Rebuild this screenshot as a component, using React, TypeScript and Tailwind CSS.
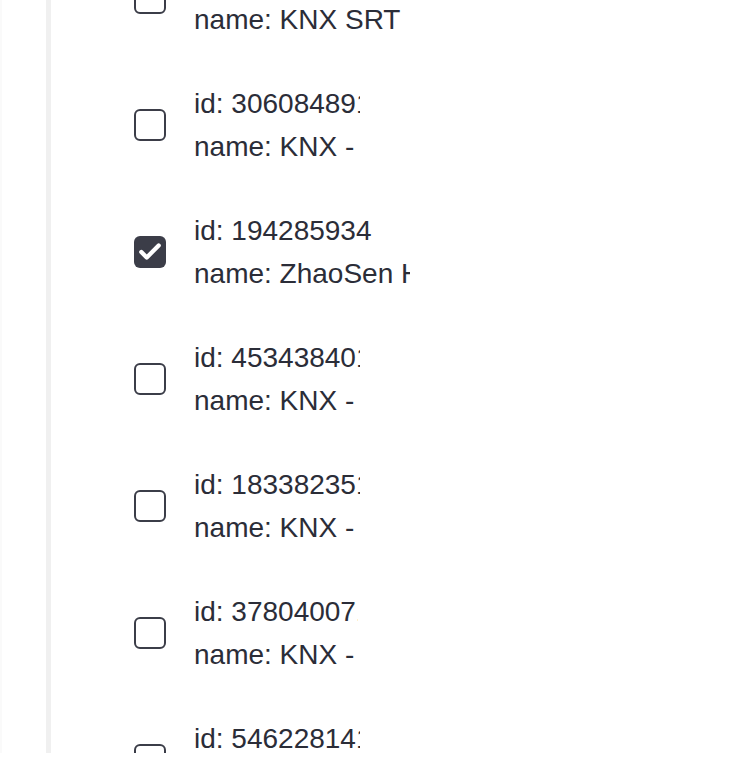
import { Check } from "lucide-react";

const rows = [
  { id: "id: 915530262", name: "name: KNX SRT", checked: false, clip: "w-[240px]" },
  { id: "id: 306084891", name: "name: KNX - Test", checked: false, clip: "w-[166px]" },
  { id: "id: 194285934", name: "name: ZhaoSen Home", checked: true, clip: "w-[216px]" },
  { id: "id: 453438401", name: "name: KNX - Office", checked: false, clip: "w-[166px]" },
  { id: "id: 183382351", name: "name: KNX - Lab", checked: false, clip: "w-[166px]" },
  { id: "id: 378040071", name: "name: KNX - Demo", checked: false, clip: "w-[164px]" },
  { id: "id: 546228141", name: "name: KNX - Hall", checked: false, clip: "w-[166px]" },
];

export default function App() {
  return (
    <div className="w-[738px] h-[764px] bg-white overflow-hidden" style={{ fontFamily: '"Liberation Sans", Arial, sans-serif' }}>
      <div className="flex h-[753px]">
        <div className="w-[2px] bg-[#fafafa]" />
        <div className="w-[44px]" />
        <div className="w-[5px] bg-[#f0f0f0]" />
        <div className="flex-1 overflow-hidden pl-[83px]">
          <div className="flex flex-col gap-[41px] mt-[-45px]">
            {rows.map((r) => (
              <div key={r.id} className="flex items-center gap-[28px]">
                {r.checked ? (
                  <div className="w-[32px] h-[32px] rounded-[6px] bg-[#3b3d48] flex items-center justify-center shrink-0">
                    <Check className="w-[26px] h-[26px] text-white" strokeWidth={4} />
                  </div>
                ) : (
                  <div className="w-[32px] h-[32px] rounded-[6px] border-2 border-[#3b3d48] bg-white shrink-0" />
                )}
                <div className={`${r.clip} overflow-hidden whitespace-nowrap text-[28px] leading-[43px] text-[#2b2d38]`}>
                  <div>{r.id}</div>
                  <div>{r.name}</div>
                </div>
              </div>
            ))}
          </div>
        </div>
      </div>
    </div>
  );
}
